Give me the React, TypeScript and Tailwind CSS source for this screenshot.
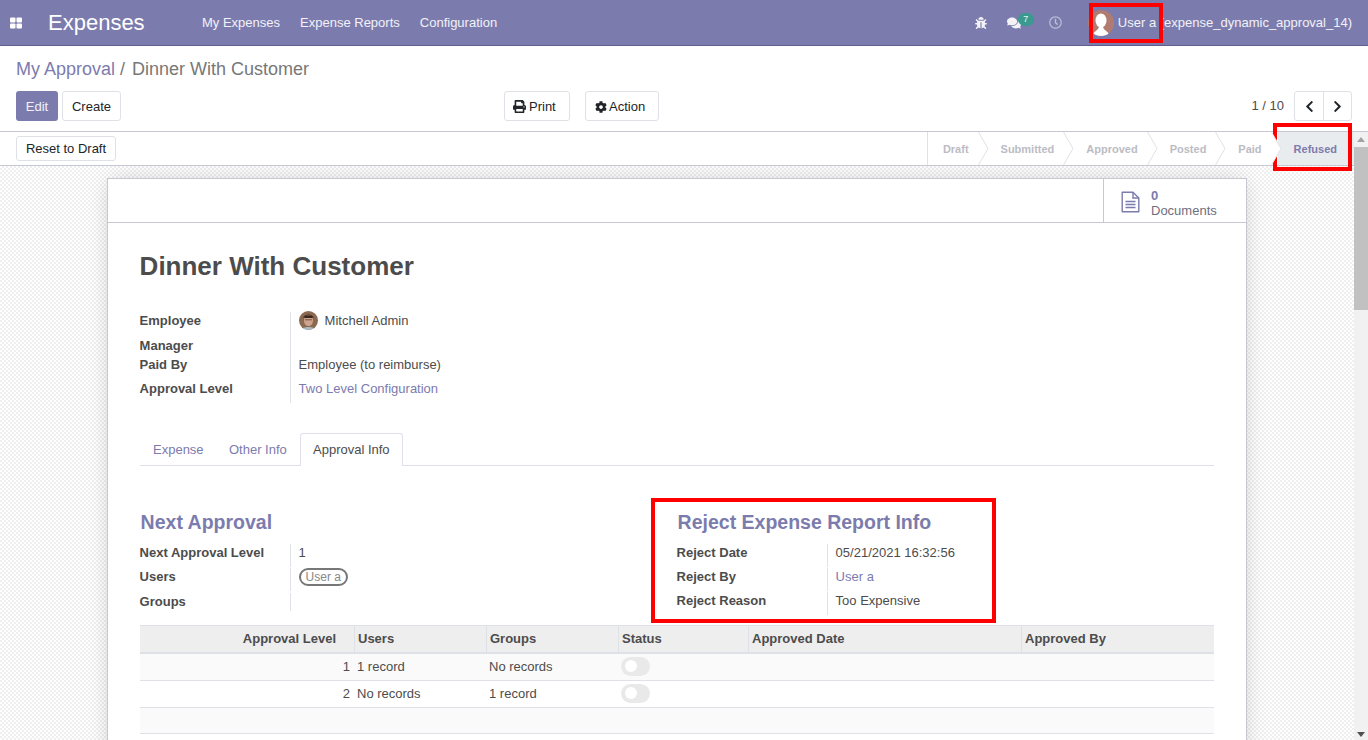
import React from "react";
import { FaBug, FaComments, FaRegClock, FaPrint, FaCog, FaChevronLeft, FaChevronRight } from "react-icons/fa";

const Row = ({ label, className, labelW, children }: { label: string; className: string; labelW: string; children?: React.ReactNode }) => (
  <div className={`flex ${className}`}>
    <div className={`${labelW} shrink-0 font-bold text-[#4c4c4c] leading-[18px]`}>{label}</div>
    <div className="flex-1 border-l border-[#dee2e6] pl-2 leading-[18px]">{children}</div>
  </div>
);

const Step = ({ label, first }: { label: string; first?: boolean }) => (
  <div className={`relative flex items-center h-full pt-px ${first ? "pl-[15px] border-l border-[#dee2e6]" : "pl-4"} pr-4 text-[11px] font-bold text-[#bcbcc4]`}>
    {label}
    <svg className="absolute top-0 right-[-4px] z-10" width="11" height="33" viewBox="0 0 11 33">
      <path d="M0.5 0 L10 16.5 L0.5 33" fill="#fff" stroke="#dee2e6" />
    </svg>
  </div>
);

const Toggle = () => (
  <div className="w-[29px] h-[19px] mb-[2px] rounded-full bg-[#e9e9e9] flex items-center pl-[4px]">
    <div className="w-[12px] h-[12px] rounded-full bg-white" />
  </div>
);

const TableRow = ({ n, users, groups, toggle, odd, h }: { n?: string; users?: string; groups?: string; toggle?: boolean; odd?: boolean; h: string }) => (
  <div className={`grid grid-cols-[214px_132px_132px_130px_273px_193px] ${h} border-b border-[#dee2e6] items-center ${odd ? "bg-[#fafafa]" : "bg-white"}`}>
    <div className="text-right pr-1">{n}</div>
    <div className="pl-[3px]">{users}</div>
    <div className="pl-[3px]">{groups}</div>
    <div className="pl-[3px]">{toggle && <Toggle />}</div>
    <div />
    <div />
  </div>
);

const Th = ({ label, right }: { label: string; right?: boolean }) => (
  <div className={`h-full flex items-center border-l border-[#dee2e6] first:border-l-0 pl-[3px] ${right ? "justify-end pr-[18px]" : ""}`}>{label}</div>
);

export default function App() {
  return (
    <div className="relative w-[1368px] h-[740px] overflow-hidden bg-white text-[13px] text-[#4c4c4c] font-['Liberation_Sans',sans-serif] flex flex-col">
      {/* Top bar */}
      <header className="h-[46px] shrink-0 bg-[#7c7bad] border-b border-[#5f5e8f] flex items-center text-white">
        <svg className="ml-[10px]" width="12" height="12" viewBox="0 0 12 12" fill="#fff">
          <rect x="0" y="0.5" width="5.5" height="5" rx="1" />
          <rect x="6.5" y="0.5" width="5.5" height="5" rx="1" />
          <rect x="0" y="6.5" width="5.5" height="5" rx="1" />
          <rect x="6.5" y="6.5" width="5.5" height="5" rx="1" />
        </svg>
        <div className="ml-[26px] text-[22px] leading-none w-[97px]">Expenses</div>
        <nav className="ml-[57px] flex gap-5 text-white/90">
          <span>My Expenses</span>
          <span>Expense Reports</span>
          <span>Configuration</span>
        </nav>
        <div className="ml-auto flex items-center pr-4">
          <FaBug className="text-[12px] mr-[20px] text-white/90" />
          <div className="relative mr-[28px]">
            <FaComments className="text-[14px] text-white/90" />
            <span className="absolute left-[11px] top-[-3px] w-[16px] h-[13px] rounded-full bg-[#3a9a90] text-[9px] leading-[13px] text-center text-white/90">7</span>
          </div>
          <FaRegClock className="text-[13px] mr-[26px] text-white/50" />
          <div className="w-[26px] h-[26px] rounded-full bg-[#b07c72] overflow-hidden mr-[4px]">
            <svg width="26" height="26" viewBox="0 0 26 26">
              <ellipse cx="13" cy="10.5" rx="5.5" ry="7" fill="#fff" />
              <path d="M5 26 C5 21 10 21 11 17 L15 17 C16 21 21 21 21 26 Z" fill="#fff" />
            </svg>
          </div>
          <span className="text-white/90 whitespace-pre">User a (expense_dynamic_approval_14)</span>
        </div>
      </header>

      {/* Control panel */}
      <section className="h-[86px] shrink-0 border-b border-[#c8c8d3] px-4 flex flex-col">
        <div className="h-[45px] flex items-center text-[18px] pt-[1px]">
          <span className="text-[#7c7bad]">My Approval</span>
          <span className="text-[#777] ml-[5px]">/</span>
          <span className="text-[#777] ml-[7px]">Dinner With Customer</span>
        </div>
        <div className="flex items-start">
          <div className="w-[488px] flex gap-1">
            <button className="h-[30px] w-[42px] pt-px rounded-[3px] bg-[#7c7bad] text-white/90">Edit</button>
            <button className="h-[30px] w-[59px] pt-px rounded-[3px] bg-white border border-[#dee2e6] text-[#212529]">Create</button>
          </div>
          <div className="flex gap-[15px]">
            <button className="h-[30px] w-[66px] pt-px pl-[8px] rounded-[3px] bg-white border border-[#dee2e6] text-[#212529] flex items-center gap-[3px]"><FaPrint className="text-[13px]" />Print</button>
            <button className="h-[30px] w-[74px] pt-px pl-[9px] rounded-[3px] bg-white border border-[#dee2e6] text-[#212529] flex items-center gap-[2px]"><FaCog className="text-[12px]" />Action</button>
          </div>
          <div className="ml-auto flex items-center">
            <span className="mr-[10px] text-[#4c4c4c]">1 / 10</span>
            <div className="flex h-[30px] border border-[#dee2e6] rounded-[3px] text-[#212529]">
              <button className="w-[29px] flex items-center justify-center border-r border-[#dee2e6]"><FaChevronLeft className="text-[13px]" /></button>
              <button className="w-[27px] flex items-center justify-center"><FaChevronRight className="text-[13px]" /></button>
            </div>
          </div>
        </div>
      </section>

      <div className="flex-1 min-h-0 flex">
        <div className="flex-1 min-w-0 flex flex-col">
          {/* Status bar */}
          <div className="h-[34px] shrink-0 border-b border-[#c8c8d3] flex items-stretch justify-between pl-4">
            <button className="self-start mt-[4px] h-[25px] w-[100px] rounded-[3px] bg-white border border-[#dee2e6] text-[#212529]">Reset to Draft</button>
            <div className="flex h-[33px] items-stretch">
              <Step label="Draft" first />
              <Step label="Submitted" />
              <Step label="Approved" />
              <Step label="Posted" />
              <Step label="Paid" />
              <div className="flex items-center pt-px bg-[#e9ecef] pl-[16px] pr-[17px] text-[11px] font-bold text-[#7c7bad]">Refused</div>
            </div>
          </div>

          {/* Content */}
          <main className="flex-1 min-h-0 overflow-hidden pt-3 pl-[107px] pr-[107px] bg-[repeating-conic-gradient(#efefef_0_25%,#fff_0_50%)] bg-[length:4px_4px]">
            <div className="w-[1140px] h-[600px] bg-white border border-[#c8c8d3] shadow-[0_0_22px_-4px_rgba(0,0,0,0.2)]">
              <div className="h-[44px] border-b border-[#c8c8d3] flex justify-end">
                <div className="w-[143px] border-l border-[#c8c8d3] flex items-center pl-[17px]">
                  <svg className="mr-[11px] mt-[2px]" width="19" height="22" viewBox="0 0 19 22" fill="none" stroke="#7c7bad" strokeWidth="1.4">
                    <path d="M1.2 1.2 H12 L17.8 7 V20.8 H1.2 Z" strokeLinejoin="round" />
                    <path d="M12 1.2 V7 H17.8" />
                    <path d="M4.5 10.5 H14.5 M4.5 13.5 H14.5 M4.5 16.5 H14.5" />
                  </svg>
                  <div className="leading-[15px] pt-[4px]">
                    <div className="font-bold text-[#7c7bad]">0</div>
                    <div className="text-[#6e6e7e]">Documents</div>
                  </div>
                </div>
              </div>

              <div className="pl-[32px] pr-[32px]">
                <h1 className="mt-[28px] h-[31px] leading-[31px] text-[26px] -ml-[0.4px] font-bold text-[#4c4c4c]">Dinner With Customer</h1>

                <div className="mt-[28px] w-[500px] -ml-[0.4px]">
                  <Row label="Employee" labelW="w-[150px]" className="h-[27px] pt-[2px]">
                    <div className="flex items-center gap-[7px] -mt-px">
                      <svg width="19" height="19" viewBox="0 0 19 19" className="rounded-full shrink-0">
                        <rect width="19" height="19" fill="#8a6a50" />
                        <path d="M4 8 C4 2 15 2 15 8 L14 6 L5 6 Z" fill="#4a3226" />
                        <ellipse cx="9.5" cy="9.5" rx="4.5" ry="5.5" fill="#d0a48c" />
                        <path d="M5 6.5 C6 3.5 13 3.5 14 6.5 L13 7 L6 7 Z" fill="#3a271d" />
                        <path d="M6 8.8 H13" stroke="#5a4030" strokeWidth="0.8" />
                        <path d="M2 19 C3 15 16 15 17 19 Z" fill="#a9bac2" />
                      </svg>
                      <span>Mitchell Admin</span>
                    </div>
                  </Row>
                  <Row label="Manager" labelW="w-[150px]" className="h-[19px]" />
                  <Row label="Paid By" labelW="w-[150px]" className="h-[24px]">Employee (to reimburse)</Row>
                  <Row label="Approval Level" labelW="w-[150px]" className="h-[23px]"><span className="text-[#7c7bad]">Two Level Configuration</span></Row>
                </div>

                <div className="mt-[30px] h-[33px] border-b border-[#dee2e6] flex">
                  <div className="w-[76px] h-[33px] flex items-center pl-[13px] text-[#7c7bad]">Expense</div>
                  <div className="w-[84px] h-[33px] flex items-center pl-[13px] text-[#7c7bad]">Other Info</div>
                  <div className="w-[103px] h-[33px] flex items-center pl-[12px] bg-white border border-b-0 border-[#dee2e6] rounded-t-[3px] -mb-px pb-px">Approval Info</div>
                </div>

                <div className="mt-[44px] flex -ml-[0.4px]">
                  <div className="w-[537px]">
                    <h2 className="pl-px h-[24px] leading-[24px] text-[19.5px] font-bold text-[#7c7bad]">Next Approval</h2>
                    <div className="mt-[9px]">
                      <Row label="Next Approval Level" labelW="w-[150px]" className="h-[24px] pt-[1px]"><span>1</span></Row>
                      <Row label="Users" labelW="w-[150px]" className="h-[24px] pt-[1px]">
                        <span className="inline-block h-[18px] leading-[14px] px-[5px] rounded-full border-2 border-[#777] text-[12px] text-[#888]">User a</span>
                      </Row>
                      <Row label="Groups" labelW="w-[150px]" className="h-[20px] pt-[2px]" />
                    </div>
                  </div>
                  <div className="w-[320px]">
                    <h2 className="pl-px h-[24px] leading-[24px] text-[19.5px] font-bold text-[#7c7bad]">Reject Expense Report Info</h2>
                    <div className="mt-[9px]">
                      <Row label="Reject Date" labelW="w-[150px]" className="h-[24px] pt-[1px]">05/21/2021 16:32:56</Row>
                      <Row label="Reject By" labelW="w-[150px]" className="h-[24px] pt-[1px]"><span className="text-[#7c7bad]">User a</span></Row>
                      <Row label="Reject Reason" labelW="w-[150px]" className="h-[24px] pt-[1px]">Too Expensive</Row>
                    </div>
                  </div>
                </div>

                <div className="mt-[10px]">
                  <div className="grid grid-cols-[214px_132px_132px_130px_273px_193px] h-[29px] bg-[#eeeeee] border-t border-[#dee2e6] border-b-2 border-b-[#dee2e6] font-bold items-center">
                    <Th label="Approval Level" right />
                    <Th label="Users" />
                    <Th label="Groups" />
                    <Th label="Status" />
                    <Th label="Approved Date" />
                    <Th label="Approved By" />
                  </div>
                  <TableRow n="1" users="1 record" groups="No records" toggle odd h="h-[27px]" />
                  <TableRow n="2" users="No records" groups="1 record" toggle h="h-[27px]" />
                  <TableRow odd h="h-[26px]" />
                  <TableRow h="h-[26px]" />
                </div>
              </div>
            </div>
          </main>
        </div>

        {/* Scrollbar */}
        <div className="w-[14px] shrink-0 bg-[#f1f1f1] flex flex-col items-center relative">
          <div className="h-[15px] flex items-center justify-center">
            <div className="w-0 h-0 border-x-[4px] border-x-transparent border-b-[5px] border-b-[#a3a3a3]" />
          </div>
          <div className="w-full h-[163px] bg-[#c1c1c1]" />
          <div className="mt-auto h-[12px] flex items-center justify-center">
            <div className="w-0 h-0 border-x-[4px] border-x-transparent border-t-[5px] border-t-[#505050]" />
          </div>
        </div>
      </div>

      {/* Annotations */}
      <div className="absolute left-[1089px] top-[3px] w-[74px] h-[40px] border-[4px] border-[#ff0000] pointer-events-none" />
      <div className="absolute left-[1273px] top-[123px] w-[79px] h-[48px] border-[4px] border-[#ff0000] pointer-events-none" />
      <div className="absolute left-[651px] top-[498px] w-[345px] h-[125px] border-[4px] border-[#ff0000] pointer-events-none" />
    </div>
  );
}
